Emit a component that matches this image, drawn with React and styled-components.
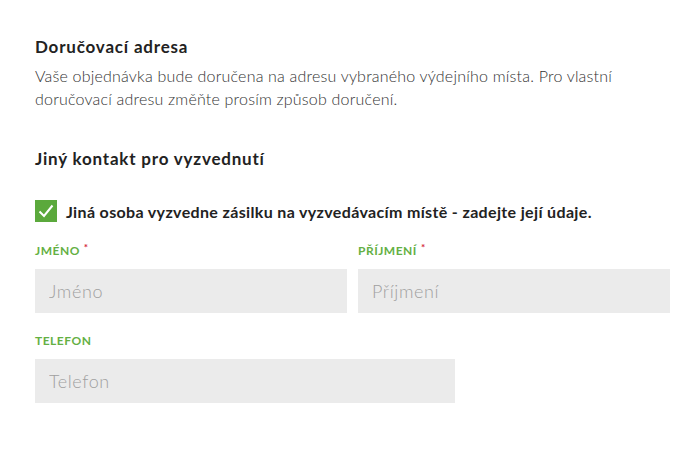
import styled, { createGlobalStyle } from 'styled-components'

const GlobalStyle = createGlobalStyle`
  body {
    margin: 0;
    background: #fff;
    font-family: 'Lato', 'Open Sans', sans-serif;
    color: #333;
  }
`

const Page = styled.div`
  padding: 36px 30px 40px 35px;
  width: 635px;
`

const Section = styled.section`
  margin-bottom: ${(p) => p.$gap || 0}px;
`

const Title = styled.h3`
  margin: 0 0 6px;
  font-size: 17px;
  line-height: 22px;
  font-weight: 700;
  letter-spacing: 0.8px;
  color: #222;
`

const Text = styled.p`
  margin: 0;
  font-size: 16px;
  line-height: 23px;
  font-weight: 300;
  letter-spacing: 0.2px;
  color: #333;
`

const CheckRow = styled.label`
  display: flex;
  align-items: center;
  gap: 9px;
  margin-top: 30px;
  font-size: 16px;
  font-weight: 700;
  letter-spacing: 0.35px;
  color: #222;
  cursor: pointer;
`

const Box = styled.span`
  display: flex;
  align-items: center;
  justify-content: center;
  width: 22px;
  height: 22px;
  background: #5ba93c;
  flex-shrink: 0;
`

const Grid = styled.div`
  display: grid;
  grid-template-columns: ${(p) => p.$cols || '1fr 1fr'};
  column-gap: 11px;
  margin-top: ${(p) => p.$top || 0}px;
`

const Field = styled.div`
  display: flex;
  flex-direction: column;
`

const Label = styled.span`
  font-size: 12px;
  line-height: 14px;
  font-weight: 700;
  letter-spacing: 0.5px;
  color: #64b043;
  text-transform: uppercase;
  margin-bottom: 11px;

  sup {
    color: #d4243a;
    font-size: 10px;
    margin-left: 4px;
    vertical-align: 4px;
    line-height: 0;
  }
`

const Input = styled.input`
  box-sizing: border-box;
  height: 44px;
  width: 100%;
  border: none;
  outline: none;
  background: #ebebeb;
  padding: 0 14px;
  font-family: inherit;
  font-size: 18px;
  font-weight: 300;
  letter-spacing: 0.6px;
  color: #333;

  &::placeholder {
    color: #a0a0a0;
  }
`

function Check() {
  return (
    <svg width="16" height="14" viewBox="0 0 16 14">
      <path d="M1.5 7.5 L6 12 L14.5 1.5" fill="none" stroke="#fff" strokeWidth="2" />
    </svg>
  )
}

export default function App() {
  return (
    <>
      <GlobalStyle />
      <Page>
        <Section $gap={38}>
          <Title>Doručovací adresa</Title>
          <Text>
            Vaše objednávka bude doručena na adresu vybraného výdejního místa. Pro vlastní
            <br />
            doručovací adresu změňte prosím způsob doručení.
          </Text>
        </Section>
        <Section>
          <Title>Jiný kontakt pro vyzvednutí</Title>
          <CheckRow>
            <Box><Check /></Box>
            Jiná osoba vyzvedne zásilku na vyzvedávacím místě - zadejte její údaje.
          </CheckRow>
          <Grid $top={22}>
            <Field>
              <Label>Jméno<sup>*</sup></Label>
              <Input placeholder="Jméno" />
            </Field>
            <Field>
              <Label>Příjmení<sup>*</sup></Label>
              <Input placeholder="Příjmení" />
            </Field>
          </Grid>
          <Grid $top={21} $cols="420px">
            <Field>
              <Label>Telefon</Label>
              <Input placeholder="Telefon" />
            </Field>
          </Grid>
        </Section>
      </Page>
    </>
  )
}
